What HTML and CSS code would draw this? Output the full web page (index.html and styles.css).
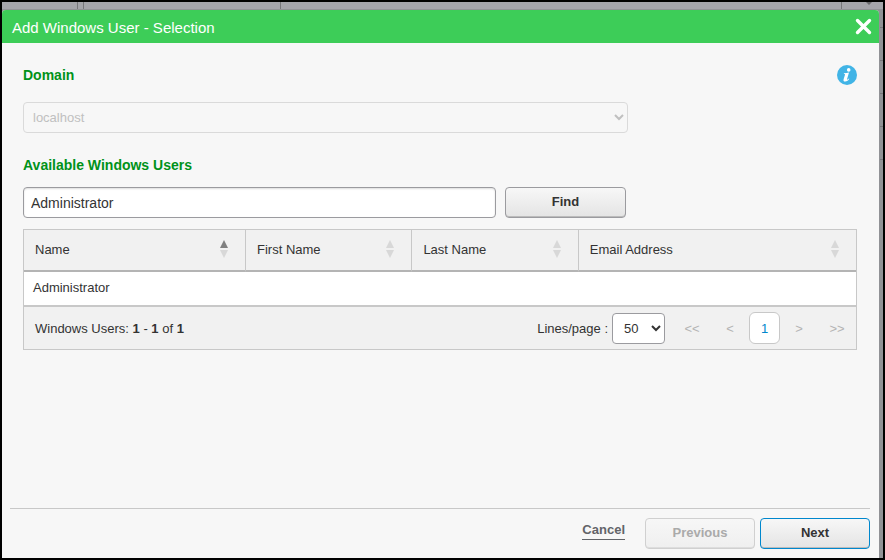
FILE: index.html
```
<!DOCTYPE html>
<html lang="en">
<head>
  <meta charset="UTF-8">
  <title>Add Windows User - Selection</title>
  <link rel="stylesheet" href="styles.css">
</head>
<body>
  <div class="backdrop">
    <div class="page-top">
      <span class="cell cell-menu"></span>
      <span class="cell cell-gap"></span>
      <span class="cell cell-nav"></span>
      <span class="cell cell-main"></span>
      <span class="cell cell-last"><i class="caret"></i></span>
    </div>

    <div class="page">
      <div class="dialog" role="dialog" aria-labelledby="dialogTitle">
        <header class="dialog-header">
          <h1 id="dialogTitle">Add Windows User - Selection</h1>
          <button type="button" class="close" aria-label="Close">
            <svg width="17" height="17" viewBox="0 0 17 17"><path d="M2.5 2.5l12 12M14.5 2.5l-12 12" stroke="#fff" stroke-width="3.4" stroke-linecap="round"/></svg>
          </button>
        </header>

        <main class="content">
          <div class="title-row">
            <h2><label for="domain">Domain</label></h2>
            <button type="button" class="info" aria-label="Information">
              <svg width="20" height="20" viewBox="0 0 20 20">
                <circle cx="10" cy="10" r="10" fill="#41b4e6"/>
                <circle cx="11.7" cy="4.9" r="1.8" fill="#fff"/>
                <path d="M7 8.200c1.700-.1 3.300-.3 5-.7L10 14.200c-.1.500.1.700.5.400.5-.3.800-.7 1.200-1.200l.6.400c-1 1.700-2.300 2.800-4.100 2.800-1.500 0-2-.9-1.600-2.300l1.400-4.600c.1-.5-.1-.8-.5-.8H6.800z" fill="#fff"/>
              </svg>
            </button>
          </div>
          <select id="domain" class="domain" disabled>
            <option>localhost</option>
          </select>

          <h2 class="users-title"><label for="search">Available Windows Users</label></h2>
          <div class="search">
            <input type="text" id="search" value="Administrator">
            <button type="button" class="btn">Find</button>
          </div>

          <table class="users">
            <colgroup>
              <col class="col-name">
              <col class="col-first">
              <col class="col-last">
              <col class="col-email">
            </colgroup>
            <thead>
              <tr>
                <th aria-sort="ascending">
                  <div class="th">Name
                    <svg class="sort asc" width="8" height="18" viewBox="0 0 8 18"><path class="up" d="M4 0l4 8H0z"/><path d="M0 10h8l-4 8z"/></svg>
                  </div>
                </th>
                <th>
                  <div class="th">First Name
                    <svg class="sort" width="8" height="18" viewBox="0 0 8 18"><path d="M4 0l4 8H0z"/><path d="M0 10h8l-4 8z"/></svg>
                  </div>
                </th>
                <th>
                  <div class="th">Last Name
                    <svg class="sort" width="8" height="18" viewBox="0 0 8 18"><path d="M4 0l4 8H0z"/><path d="M0 10h8l-4 8z"/></svg>
                  </div>
                </th>
                <th>
                  <div class="th">Email Address
                    <svg class="sort" width="8" height="18" viewBox="0 0 8 18"><path d="M4 0l4 8H0z"/><path d="M0 10h8l-4 8z"/></svg>
                  </div>
                </th>
              </tr>
            </thead>
            <tbody>
              <tr>
                <td>Administrator</td>
                <td></td>
                <td></td>
                <td></td>
              </tr>
            </tbody>
          </table>

          <div class="table-footer">
            <p>Windows Users: <b>1</b> - <b>1</b> of <b>1</b></p>
            <div class="paging">
              <label for="lines">Lines/page :</label>
              <select id="lines" class="lines">
                <option>10</option>
                <option>20</option>
                <option selected>50</option>
              </select>
              <button type="button" class="page-btn" disabled>&lt;&lt;</button>
              <button type="button" class="page-btn" disabled>&lt;</button>
              <button type="button" class="page-btn current">1</button>
              <button type="button" class="page-btn" disabled>&gt;</button>
              <button type="button" class="page-btn" disabled>&gt;&gt;</button>
            </div>
          </div>
        </main>

        <footer class="dialog-footer">
          <a href="#" class="cancel">Cancel</a>
          <button type="button" class="btn" disabled>Previous</button>
          <button type="button" class="btn primary">Next</button>
        </footer>
      </div>

      <div class="page-side">
        <span></span><span></span><span></span><span></span><span></span>
      </div>
    </div>
  </div>
</body>
</html>
```
FILE: styles.css
```
* {
  box-sizing: border-box;
  margin: 0;
  padding: 0;
}

body {
  font-family: "Liberation Sans", Arial, sans-serif;
  font-size: 13px;
  color: #333;
}

button, input, select {
  font-family: inherit;
  font-size: 13px;
  color: #333;
}

.backdrop {
  min-height: 100vh;
  display: flex;
  flex-direction: column;
  border: 2px solid #000;
  background: #919296;
}

/* strip of the page behind the dialog */
.page-top {
  display: flex;
  height: 7px;
  background: #a5a5ab;
}

.cell {
  border-right: 1px solid #77777b;
}

.cell-menu {
  width: 76px;
}

.cell-gap {
  width: 6px;
}

.cell-nav {
  width: 197px;
}

.cell-main {
  flex: 1;
}

.cell-last {
  width: 41px;
  padding-left: 24px;
  border-right: none;
}

.caret {
  display: block;
  width: 5px;
  border: 3px solid transparent;
  border-top-color: #68686c;
  border-bottom: none;
}

.page {
  flex: 1;
  display: flex;
  padding-top: 1px;
}

.page-side {
  width: 4px;
  padding: 16px 0 0 1px;
}

.page-side span {
  display: block;
  height: 33px;
  border-bottom: 1px solid #77777b;
}

.page-side span:first-child {
  height: 2px;
}

.dialog {
  flex: 1;
  display: flex;
  flex-direction: column;
  background: #f7f7f7;
  border-radius: 4px 4px 0 0;
}

.dialog-header {
  display: flex;
  align-items: center;
  justify-content: space-between;
  height: 33px;
  padding: 0 7px 0 10px;
  background: #3dcd58;
  border-radius: 4px 4px 0 0;
}

.dialog-header h1 {
  font-size: 15px;
  font-weight: normal;
  line-height: 20px;
  padding-top: 2px;
  color: #fff;
}

.close, .info {
  display: flex;
  border: none;
  background: none;
  cursor: pointer;
}

.content {
  flex: 1;
  padding: 22px 22px 22px 21px;
}

.title-row {
  display: flex;
  justify-content: space-between;
  margin-bottom: 17px;
}

h2 {
  font-size: 14px;
  line-height: 20px;
  color: #009219;
}

select {
  height: 31px;
  border-radius: 4px;
}

.domain {
  display: block;
  width: 605px;
  max-width: 100%;
  padding: 0 1px 0 5px;
  border: 1px solid #dadada;
  background: #f7f7f7;
  color: #c0c0c0;
  opacity: 1;
}

.users-title {
  margin: 22px 0 12px;
}

.search {
  display: flex;
  gap: 9px;
  max-width: 603px;
  margin-bottom: 11px;
}

.search input {
  flex: 1;
  min-width: 0;
  height: 31px;
  padding: 0 7px;
  border: 1px solid #9b9b9f;
  border-radius: 4px;
  background: #fff;
  box-shadow: inset 0 1px 2px #ddd;
  font-size: 14px;
}

.btn {
  width: 110px;
  height: 31px;
  padding-bottom: 2px;
  border: 1px solid #9b9b9f;
  border-radius: 4px;
  background: linear-gradient(#f7f7f7, #e4e4e4);
  box-shadow: inset 0 -1px 0 #bbb;
  font-weight: bold;
  cursor: pointer;
}

.search .btn {
  width: 121px;
}

.btn:disabled {
  border-color: #d0d0d0;
  background: linear-gradient(#f7f7f7, #efefef);
  box-shadow: inset 0 -1px 0 #ddd;
  color: #aaa;
  cursor: default;
}

.btn.primary {
  border-color: #0087cd;
}

.users {
  width: 100%;
  table-layout: fixed;
  border-collapse: separate;
  border-spacing: 0;
  border: 1px solid #c8c8c8;
}

.col-name {
  width: 222px;
}

.col-first, .col-last {
  width: 20%;
}

.users th {
  height: 42px;
  padding: 0 17px 2px 11px;
  border-right: 1px solid #c8c8c8;
  border-bottom: 2px solid #b4b4b4;
  background: #f1f1f1;
  font-weight: normal;
  text-align: left;
}

.users th:last-child {
  border-right: none;
}

.th {
  display: flex;
  align-items: center;
  justify-content: space-between;
}

.sort {
  fill: #d8d8d8;
}

.sort.asc .up {
  fill: #808080;
}

.users td {
  height: 33px;
  padding: 0 9px 2px;
  background: #fff;
}

.table-footer {
  display: flex;
  align-items: center;
  justify-content: space-between;
  height: 44px;
  padding-left: 11px;
  border: 1px solid #c8c8c8;
  background: #f1f1f1;
}

.paging {
  display: flex;
  align-items: center;
}

.lines {
  width: 53px;
  margin: 0 8px 0 4px;
  padding: 0 1px 0 7px;
  border: 1px solid #9b9b9f;
  background: #fff;
}

.page-btn {
  min-width: 38px;
  height: 32px;
  border: none;
  background: none;
}

.page-btn:disabled {
  color: #b4b4b4;
}

.page-btn.current {
  min-width: 31px;
  border: 1px solid #c8c8c8;
  border-radius: 6px;
  background: #fff;
  color: #0087cd;
}

.dialog-footer {
  display: flex;
  align-items: center;
  justify-content: flex-end;
  gap: 5px;
  margin: 0 9px 0 8px;
  padding: 9px 0;
  border-top: 1px solid #c8c8c8;
}

.cancel {
  margin: 0 15px 6px 0;
  padding-bottom: 2px;
  border-bottom: 1px solid #626469;
  color: #626469;
  font-weight: bold;
  text-decoration: none;
}
```
